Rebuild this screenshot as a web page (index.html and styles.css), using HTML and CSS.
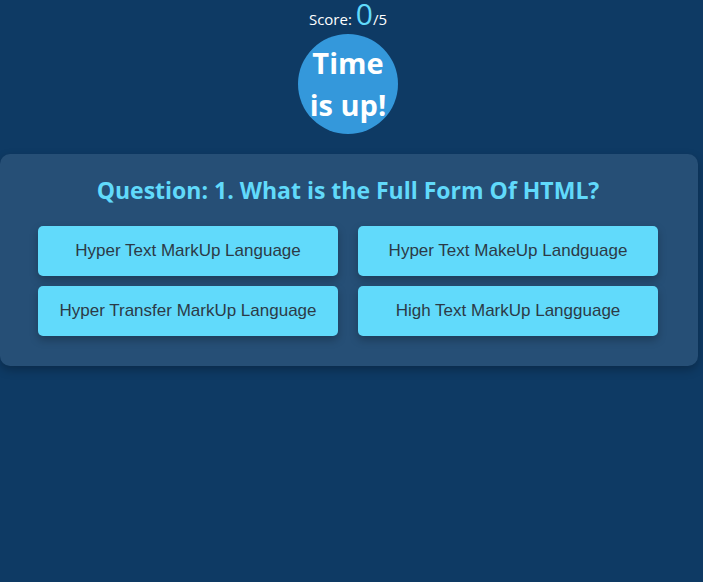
FILE: index.html
```html
<!DOCTYPE html>
<html lang="en">
<head>
<meta charset="utf-8">
<title>Quiz</title>
<link rel="stylesheet" href="styles.css">
</head>
<body>
<div class="app">
  <div class="top">
    <div class="score"><span class="score-label">Score:</span><span class="score-num">0</span><span class="score-total">/5</span></div>
    <div class="timer"><span>Time is up!</span></div>
  </div>
  <div class="card">
    <h2 class="question">Question: 1. What is the Full Form Of HTML?</h2>
    <div class="options">
      <button class="option">Hyper Text MarkUp Language</button>
      <button class="option">Hyper Text MakeUp Landguage</button>
      <button class="option">Hyper Transfer MarkUp Language</button>
      <button class="option">High Text MarkUp Langguage</button>
    </div>
  </div>
</div>
</body>
</html>
```
FILE: styles.css
```css
html, body {
  margin: 0;
  padding: 0;
}
body {
  background: #0e3a64;
  font-family: "Open Sans", "Noto Sans", sans-serif;
  color: #fff;
  width: 703px;
  height: 582px;
  overflow: hidden;
}
.app {
  width: 698px;
}
.top {
  width: 696px;
  display: flex;
  flex-direction: column;
  align-items: center;
}
.score {
  display: flex;
  align-items: baseline;
  height: 29px;
  font-size: 15px;
  white-space: nowrap;
}
.score-label,
.score-total {
  line-height: 20px;
}
.score-num {
  margin-left: 4px;
  font-size: 30px;
  color: #61dafb;
  line-height: 27px;
}
.timer {
  margin-top: 5px;
  width: 100px;
  height: 100px;
  border-radius: 50%;
  background: #3498db;
  display: flex;
  align-items: center;
  justify-content: center;
  text-align: center;
  font-size: 29px;
  font-weight: 700;
  line-height: 42px;
}
.card {
  box-sizing: border-box;
  width: 698px;
  margin-top: 20px;
  padding: 21px 40px 30px 38px;
  background: #264f76;
  border-radius: 10px;
  box-shadow: 0 4px 10px rgba(0, 0, 0, 0.25);
}
.question {
  margin: 0 0 21px;
  text-align: center;
  color: #61dafb;
  font-size: 23px;
  font-weight: 700;
  line-height: 30px;
  white-space: nowrap;
}
.options {
  display: grid;
  grid-template-columns: 300px 300px;
  column-gap: 20px;
  row-gap: 10px;
}
.option {
  height: 50px;
  border: none;
  border-radius: 5px;
  background: #61dafb;
  color: #2c3a47;
  font-family: "Liberation Sans", Arial, sans-serif;
  font-size: 17px;
  box-shadow: 0 4px 8px rgba(0, 0, 0, 0.25);
  padding: 0;
}
```
